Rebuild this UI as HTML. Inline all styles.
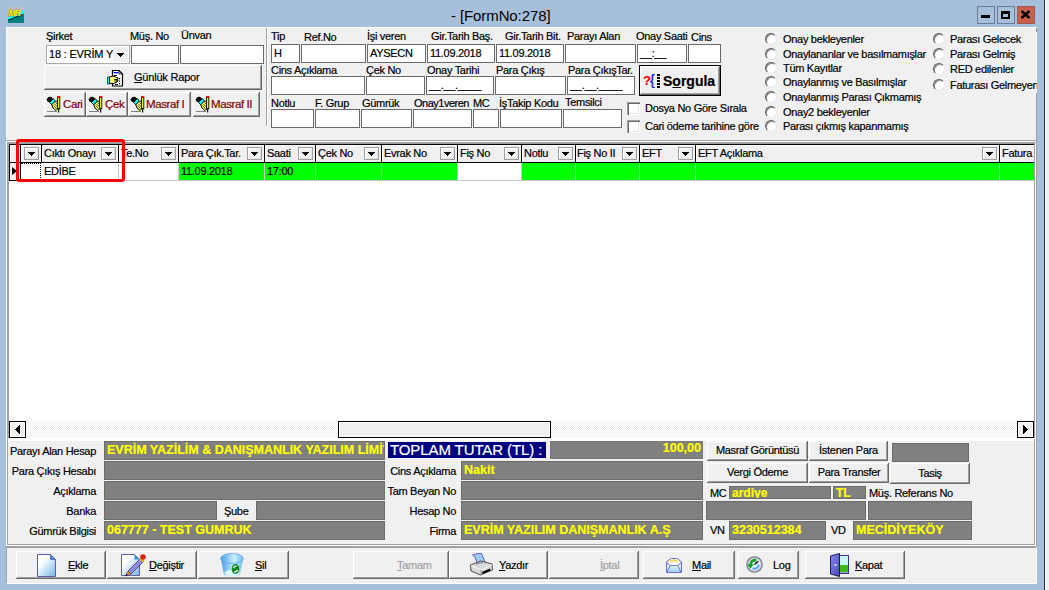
<!DOCTYPE html>
<html><head><meta charset="utf-8">
<style>
html,body{margin:0;padding:0}
body{width:1049px;height:590px;background:#a6bfdb;position:relative;overflow:hidden;font-family:"Liberation Sans",sans-serif;font-size:11px;color:#000;-webkit-text-stroke-width:0.2px}
.a{position:absolute;box-sizing:border-box}
.t{position:absolute;white-space:nowrap;font-size:11px;line-height:13px;letter-spacing:-0.3px;color:#000}
.e{position:absolute;box-sizing:border-box;background:#fff;border:1px solid #6a6a6a;overflow:hidden;white-space:nowrap;font-size:11px;line-height:17px;letter-spacing:-0.3px;padding-left:2px}
.g{position:absolute;box-sizing:border-box;background:#808080;border:1px solid #6c6c6c;overflow:hidden;white-space:nowrap;color:#ff0;font-weight:bold;font-size:12.5px;line-height:17px;padding-left:2px;letter-spacing:0}
.b{position:absolute;box-sizing:border-box;background:#f0f0f0;box-shadow:inset -1px -1px #696969,inset 1px 1px #fff,inset -2px -2px #a0a0a0,inset 2px 2px #f0f0f0;white-space:nowrap;font-size:11px;letter-spacing:-0.3px;text-align:center}
.dd{position:absolute;box-sizing:border-box;width:15px;height:13px;top:147px;border:1px solid #a0a0a0;background:#f0f0f0;box-shadow:inset 1px 1px #fff,inset -1px -1px #e3e3e3}
.dd:after{content:"";position:absolute;left:3px;top:4px;width:7px;height:4px;background:linear-gradient(#000,#000) 0 0/7px 1px no-repeat,linear-gradient(#000,#000) 1px 1px/5px 1px no-repeat,linear-gradient(#000,#000) 2px 2px/3px 1px no-repeat,linear-gradient(#000,#000) 3px 3px/1px 1px no-repeat}
.rd{position:absolute;box-sizing:border-box;width:12px;height:12px;border-radius:50%;background:#fff;border:1px solid;border-color:#5c5c5c #e8e8e8 #e8e8e8 #5c5c5c;box-shadow:inset 1px 1px #8a8a8a}
.cb{position:absolute;box-sizing:border-box;width:13px;height:13px;background:#fff;box-shadow:inset 1px 1px #a0a0a0,inset 2px 2px #696969,inset -1px -1px #fff,inset -2px -2px #e3e3e3}
.hc{position:absolute;top:145px;height:17px;background:#f0f0f0}
.vl{position:absolute;width:1px}
</style></head><body>
<!-- title bar -->
<div class="a" style="left:1044px;top:0;width:1px;height:590px;background:#2e3133"></div>
<div class="a" style="left:1045px;top:0;width:4px;height:590px;background:#f0f0f0;border-left:1px solid #fff"></div>
<div class="t" style="left:451px;top:7px;font-size:15px;line-height:18px;letter-spacing:-0.1px;-webkit-text-stroke-width:0">- [FormNo:278]</div>


<!-- app icon -->
<svg class="a" style="left:8px;top:7px" width="16" height="16" viewBox="0 0 16 16"><rect width="16" height="16" fill="#c0c0c0"/><polygon points="0,10.5 13,6 12,4 16,3 15,7.5 14,6.5 0,13" fill="#00ffff"/><polygon points="0,13 14,8 16,6 16,16 0,16" fill="#008080"/><path d="M0 13.3 L14.5 7.5" stroke="#002828" stroke-width="1.2"/><text x="0.5" y="9" font-family="Liberation Sans" font-weight="bold" font-style="italic" font-size="8.5" letter-spacing="-0.8" fill="#ffff00" stroke="#303000" stroke-width="0.5" paint-order="stroke">MR</text></svg>
<!-- caption buttons -->
<div class="a" style="left:977px;top:6px;width:18px;height:18px;border:1px solid #6a7d95;background:#a6bfdb"></div>
<div class="a" style="left:981px;top:15px;width:9px;height:3px;background:#000"></div>
<div class="a" style="left:997px;top:6px;width:18px;height:18px;border:1px solid #6a7d95;background:#a6bfdb"></div>
<div class="a" style="left:1001px;top:11px;width:9px;height:8px;border:2px solid #000;border-top-width:3px"></div>
<div class="a" style="left:1017px;top:6px;width:18px;height:18px;border:1px solid #9a5a4e;background:#c9604c"></div>
<svg class="a" style="left:1020px;top:10px" width="11" height="9" viewBox="0 0 11 9"><path d="M1.5 1 L9.5 8 M9.5 1 L1.5 8" stroke="#000" stroke-width="2.4"/></svg>

<!-- client area -->
<div class="a" style="left:6px;top:27px;width:1031px;height:557px;background:#f0f0f0;border:1px solid #fff"></div>


<!-- ===== top panel ===== -->
<div class="t" style="left:46px;top:30px">Şirket</div>
<div class="t" style="left:130px;top:30px">Müş. No</div>
<div class="t" style="left:181px;top:29px">Ünvan</div>
<div class="a" style="left:46px;top:45px;width:84px;height:19px;background:#fff;border:1px solid #a9a9a9"></div>
<div class="t" style="left:49px;top:48px;letter-spacing:-0.2px">18 : EVRİM Y</div>
<div class="a" style="left:113px;top:47px;width:15px;height:15px;background:#f0f0f0"></div>
<div class="a" style="left:117px;top:53px;width:7px;height:4px;background:linear-gradient(#000,#000) 0 0/7px 1px no-repeat,linear-gradient(#000,#000) 1px 1px/5px 1px no-repeat,linear-gradient(#000,#000) 2px 2px/3px 1px no-repeat,linear-gradient(#000,#000) 3px 3px/1px 1px no-repeat"></div>
<div class="e" style="left:131px;top:45px;width:48px;height:19px"></div>
<div class="e" style="left:180px;top:45px;width:84px;height:19px"></div>
<div class="b" style="left:44px;top:65px;width:218px;height:25px"></div>
<div class="t" style="left:134px;top:71px;letter-spacing:-0.2px"><u>G</u>ünlük Rapor</div>
<div class="b" style="left:44px;top:92px;width:42px;height:25px"></div>
<div class="b" style="left:86px;top:92px;width:42px;height:25px"></div>
<div class="b" style="left:128px;top:92px;width:63px;height:25px"></div>
<div class="b" style="left:193px;top:92px;width:67px;height:25px"></div>
<div class="t" style="left:63px;top:98px;color:#800000;font-size:11.5px;letter-spacing:-0.4px">Cari</div>
<div class="t" style="left:105px;top:98px;color:#800000;font-size:11.5px;letter-spacing:-0.4px">Çek</div>
<div class="t" style="left:146px;top:98px;color:#800000;font-size:11.5px;letter-spacing:-0.4px">Masraf I</div>
<div class="t" style="left:211px;top:98px;color:#800000;font-size:11.5px;letter-spacing:-0.4px">Masraf II</div>
<svg class="a" style="left:46px;top:96px" width="16" height="17" viewBox="0 0 16 17"><path d="M0.5 3.5 L2.5 1 L5 0.8 L7.5 3 L4.5 6.5 L1.5 5.5 Z" fill="#000"/><path d="M3.5 6.5 L7.2 2.8 L9.5 5 L5.8 8.8 Z" fill="#00ffff" stroke="#000" stroke-width="0.9"/><path d="M5.8 8.8 L9.5 5 L11.8 5.5 L12.2 9 L12 12.5 L10 14.5 L7 12 Z" fill="#ffff70" stroke="#000" stroke-width="1"/><path d="M7.5 9.5 L10.5 12.5 M8.5 8 L11.5 11 M9.5 6.5 L12 9" stroke="#000" stroke-width="0.7"/><rect x="11.6" y="1.2" width="2.2" height="11.5" fill="#ffff00" stroke="#000" stroke-width="0.9"/><rect x="11.2" y="0" width="3" height="1.5" fill="#ff0000"/><path d="M12.7 12.5 V16.5" stroke="#000" stroke-width="1.1"/><path d="M1 15.5 H11" stroke="#808080" stroke-width="1"/></svg>
<svg class="a" style="left:88px;top:96px" width="16" height="17" viewBox="0 0 16 17"><path d="M0.5 3.5 L2.5 1 L5 0.8 L7.5 3 L4.5 6.5 L1.5 5.5 Z" fill="#000"/><path d="M3.5 6.5 L7.2 2.8 L9.5 5 L5.8 8.8 Z" fill="#00ffff" stroke="#000" stroke-width="0.9"/><path d="M5.8 8.8 L9.5 5 L11.8 5.5 L12.2 9 L12 12.5 L10 14.5 L7 12 Z" fill="#ffff70" stroke="#000" stroke-width="1"/><path d="M7.5 9.5 L10.5 12.5 M8.5 8 L11.5 11 M9.5 6.5 L12 9" stroke="#000" stroke-width="0.7"/><rect x="11.6" y="1.2" width="2.2" height="11.5" fill="#ffff00" stroke="#000" stroke-width="0.9"/><rect x="11.2" y="0" width="3" height="1.5" fill="#ff0000"/><path d="M12.7 12.5 V16.5" stroke="#000" stroke-width="1.1"/><path d="M1 15.5 H11" stroke="#808080" stroke-width="1"/></svg>
<svg class="a" style="left:130px;top:96px" width="16" height="17" viewBox="0 0 16 17"><path d="M0.5 3.5 L2.5 1 L5 0.8 L7.5 3 L4.5 6.5 L1.5 5.5 Z" fill="#000"/><path d="M3.5 6.5 L7.2 2.8 L9.5 5 L5.8 8.8 Z" fill="#00ffff" stroke="#000" stroke-width="0.9"/><path d="M5.8 8.8 L9.5 5 L11.8 5.5 L12.2 9 L12 12.5 L10 14.5 L7 12 Z" fill="#ffff70" stroke="#000" stroke-width="1"/><path d="M7.5 9.5 L10.5 12.5 M8.5 8 L11.5 11 M9.5 6.5 L12 9" stroke="#000" stroke-width="0.7"/><rect x="11.6" y="1.2" width="2.2" height="11.5" fill="#ffff00" stroke="#000" stroke-width="0.9"/><rect x="11.2" y="0" width="3" height="1.5" fill="#ff0000"/><path d="M12.7 12.5 V16.5" stroke="#000" stroke-width="1.1"/><path d="M1 15.5 H11" stroke="#808080" stroke-width="1"/></svg>
<svg class="a" style="left:195px;top:96px" width="16" height="17" viewBox="0 0 16 17"><path d="M0.5 3.5 L2.5 1 L5 0.8 L7.5 3 L4.5 6.5 L1.5 5.5 Z" fill="#000"/><path d="M3.5 6.5 L7.2 2.8 L9.5 5 L5.8 8.8 Z" fill="#00ffff" stroke="#000" stroke-width="0.9"/><path d="M5.8 8.8 L9.5 5 L11.8 5.5 L12.2 9 L12 12.5 L10 14.5 L7 12 Z" fill="#ffff70" stroke="#000" stroke-width="1"/><path d="M7.5 9.5 L10.5 12.5 M8.5 8 L11.5 11 M9.5 6.5 L12 9" stroke="#000" stroke-width="0.7"/><rect x="11.6" y="1.2" width="2.2" height="11.5" fill="#ffff00" stroke="#000" stroke-width="0.9"/><rect x="11.2" y="0" width="3" height="1.5" fill="#ff0000"/><path d="M12.7 12.5 V16.5" stroke="#000" stroke-width="1.1"/><path d="M1 15.5 H11" stroke="#808080" stroke-width="1"/></svg>
<svg class="a" style="left:107px;top:70px" width="17" height="17" viewBox="0 0 17 17"><path d="M5.5 0.5 H12 L15.5 4 V16 H5.5 Z" fill="#fff" stroke="#000" stroke-width="1.2"/><path d="M12 0.5 V4 H15.5" fill="none" stroke="#000" stroke-width="0.8"/><rect x="6.5" y="2" width="5" height="1.3" fill="#00f"/><rect x="7" y="5" width="3" height="1" fill="#000"/><rect x="12" y="8" width="1.2" height="1.2" fill="#000"/><rect x="12" y="10.5" width="1.2" height="1.2" fill="#000"/><rect x="12" y="13" width="1.2" height="1.2" fill="#000"/><rect x="8" y="14" width="3" height="1" fill="#000"/><rect x="0.5" y="7" width="2" height="7" fill="#0ff" stroke="#000" stroke-width="0.6"/><path d="M2.5 7 L6 6 L11 8 L11 9.5 L8 9.5 L11 10.5 L10 12 L7 13.5 L2.5 13.5 Z" fill="#ffff80" stroke="#000" stroke-width="1"/><path d="M7 9.5 L11 9.5 M7 11 L10.5 11" stroke="#000" stroke-width="0.8"/></svg>
<!-- separator -->
<div class="a" style="left:266px;top:28px;width:2px;height:98px;border-left:1px solid #a0a0a0;border-right:1px solid #fff"></div>

<!-- row 0 labels -->
<div class="t" style="left:271px;top:30px">Tip</div>
<div class="t" style="left:304px;top:31px">Ref.No</div>
<div class="t" style="left:367px;top:30px">İşi veren</div>
<div class="t" style="left:431px;top:30px">Gir.Tarih Baş.</div>
<div class="t" style="left:505px;top:30px">Gir.Tarih Bit.</div>
<div class="t" style="left:567px;top:30px">Parayı Alan</div>
<div class="t" style="left:636px;top:30px">Onay Saati</div>
<div class="t" style="left:691px;top:31px">Cins</div>
<!-- row 0 edits -->
<div class="e" style="left:271px;top:44px;width:29px;height:19px">H</div>
<div class="e" style="left:301px;top:44px;width:65px;height:19px"></div>
<div class="e" style="left:367px;top:44px;width:59px;height:19px">AYSECN</div>
<div class="e" style="left:427px;top:44px;width:68px;height:19px">11.09.2018</div>
<div class="e" style="left:496px;top:44px;width:68px;height:19px">11.09.2018</div>
<div class="e" style="left:565px;top:44px;width:71px;height:19px"></div>
<div class="e" style="left:637px;top:44px;width:50px;height:19px">__:__</div>
<div class="e" style="left:688px;top:44px;width:33px;height:19px"></div>
<!-- row 1 labels -->
<div class="t" style="left:271px;top:64px">Cins Açıklama</div>
<div class="t" style="left:366px;top:64px">Çek No</div>
<div class="t" style="left:427px;top:64px">Onay Tarihi</div>
<div class="t" style="left:496px;top:64px">Para Çıkış</div>
<div class="t" style="left:568px;top:64px">Para ÇıkışTar.</div>
<!-- row 1 edits -->
<div class="e" style="left:271px;top:76px;width:94px;height:19px"></div>
<div class="e" style="left:366px;top:76px;width:59px;height:19px"></div>
<div class="e" style="left:426px;top:76px;width:68px;height:19px">__.__.____</div>
<div class="e" style="left:495px;top:76px;width:71px;height:19px"></div>
<div class="e" style="left:567px;top:76px;width:68px;height:19px">__.__.____</div>
<!-- sorgula -->
<div class="a" style="left:639px;top:65px;width:82px;height:31px;border:1px solid #000;background:#f0f0f0;box-shadow:inset -1px -1px #696969,inset 1px 1px #fff,inset -2px -2px #a0a0a0"></div>
<div class="t" style="left:643px;top:73px;color:#f00;font-weight:bold;font-size:13px;line-height:15px;letter-spacing:0">?</div>
<div class="t" style="left:650px;top:72px;color:#00f;font-size:14px;line-height:16px;letter-spacing:0">{</div>
<div class="a" style="left:657px;top:74px;width:3px;height:14px;background:repeating-linear-gradient(#000 0 2px,transparent 2px 3px)"></div>
<div class="t" style="left:663px;top:74px;font-weight:bold;font-size:14px;line-height:15px;letter-spacing:0">S<u>o</u>rgula</div>
<!-- row 2 labels -->
<div class="t" style="left:271px;top:97px">Notlu</div>
<div class="t" style="left:315px;top:97px">F. Grup</div>
<div class="t" style="left:362px;top:97px">Gümrük</div>
<div class="t" style="left:414px;top:97px;letter-spacing:-0.5px">Onay1veren</div>
<div class="t" style="left:473px;top:97px">MC</div>
<div class="t" style="left:499px;top:97px">İşTakip Kodu</div>
<div class="t" style="left:565px;top:96px">Temsilci</div>
<!-- row 2 edits -->
<div class="e" style="left:271px;top:109px;width:43px;height:19px"></div>
<div class="e" style="left:315px;top:109px;width:45px;height:19px"></div>
<div class="e" style="left:361px;top:109px;width:51px;height:19px"></div>
<div class="e" style="left:413px;top:109px;width:59px;height:19px"></div>
<div class="e" style="left:473px;top:109px;width:26px;height:19px"></div>
<div class="e" style="left:500px;top:109px;width:62px;height:19px"></div>
<div class="e" style="left:563px;top:109px;width:59px;height:19px"></div>
<!-- checkboxes -->
<div class="cb" style="left:627px;top:102px"></div>
<div class="cb" style="left:627px;top:120px"></div>
<div class="t" style="left:645px;top:102px">Dosya No Göre Sırala</div>
<div class="t" style="left:645px;top:120px">Cari ödeme tarihine göre</div>
<!-- radios col 1 -->
<div class="rd" style="left:765px;top:33px"></div>
<div class="rd" style="left:765px;top:48px"></div>
<div class="rd" style="left:765px;top:62px"></div>
<div class="rd" style="left:765px;top:76px"></div>
<div class="rd" style="left:765px;top:91px"></div>
<div class="rd" style="left:765px;top:106px"></div>
<div class="rd" style="left:765px;top:120px"></div>
<div class="t" style="left:783px;top:33px">Onay bekleyenler</div>
<div class="t" style="left:783px;top:48px">Onaylananlar ve basılmamışlar</div>
<div class="t" style="left:783px;top:62px">Tüm Kayıtlar</div>
<div class="t" style="left:783px;top:76px">Onaylanmış ve Basılmışlar</div>
<div class="t" style="left:783px;top:91px">Onaylanmış Parası Çıkmamış</div>
<div class="t" style="left:783px;top:106px">Onay2 bekleyenler</div>
<div class="t" style="left:783px;top:120px">Parası çıkmış kapanmamış</div>
<!-- radios col 2 -->
<div class="rd" style="left:933px;top:33px"></div>
<div class="rd" style="left:933px;top:48px"></div>
<div class="rd" style="left:933px;top:63px"></div>
<div class="rd" style="left:933px;top:79px"></div>
<div class="t" style="left:950px;top:33px">Parası Gelecek</div>
<div class="t" style="left:950px;top:48px">Parası Gelmiş</div>
<div class="t" style="left:950px;top:63px">RED edilenler</div>
<div class="a" style="left:950px;top:79px;width:87px;height:14px;overflow:hidden"><div class="t" style="left:0;top:0">Faturası Gelmeyen</div></div>

<!-- ===== grid ===== -->
<div class="a" style="left:6px;top:140px;width:1031px;height:1px;background:#a0a0a0"></div><div class="a" style="left:6px;top:141px;width:1030px;height:1px;background:#fff"></div>
<div class="a" style="left:7px;top:142px;width:1029px;height:297px;border-top:1px solid #a0a0a0;border-left:1px solid #a0a0a0;border-right:1px solid #fff;border-bottom:1px solid #fff;background:#fff"></div>
<div class="a" style="left:8px;top:143px;width:1027px;height:295px;border-top:1px solid #a0a0a0;border-left:1px solid #a0a0a0;border-right:1px solid #a0a0a0;border-bottom:1px solid #a0a0a0;background:#fff"></div>
<div class="a" style="left:9px;top:144px;width:1025px;height:19px;background:#f0f0f0;border-top:1px solid #000;border-bottom:1px solid #000"></div><div class="a" style="left:10px;top:145px;width:1024px;height:1px;background:#fff"></div>
<div class="a" style="left:9px;top:144px;width:1px;height:19px;background:#000"></div>
<div class="a" style="left:10px;top:145px;width:1px;height:17px;background:#fff"></div>
<div class="a" style="left:20px;top:144px;width:1px;height:19px;background:#000"></div>
<div class="a" style="left:21px;top:145px;width:1px;height:17px;background:#fff"></div>
<div class="a" style="left:41px;top:144px;width:1px;height:19px;background:#000"></div>
<div class="a" style="left:42px;top:145px;width:1px;height:17px;background:#fff"></div>
<div class="a" style="left:118px;top:144px;width:1px;height:19px;background:#000"></div>
<div class="a" style="left:119px;top:145px;width:1px;height:17px;background:#fff"></div>
<div class="a" style="left:178px;top:144px;width:1px;height:19px;background:#000"></div>
<div class="a" style="left:179px;top:145px;width:1px;height:17px;background:#fff"></div>
<div class="a" style="left:264px;top:144px;width:1px;height:19px;background:#000"></div>
<div class="a" style="left:265px;top:145px;width:1px;height:17px;background:#fff"></div>
<div class="a" style="left:315px;top:144px;width:1px;height:19px;background:#000"></div>
<div class="a" style="left:316px;top:145px;width:1px;height:17px;background:#fff"></div>
<div class="a" style="left:381px;top:144px;width:1px;height:19px;background:#000"></div>
<div class="a" style="left:382px;top:145px;width:1px;height:17px;background:#fff"></div>
<div class="a" style="left:457px;top:144px;width:1px;height:19px;background:#000"></div>
<div class="a" style="left:458px;top:145px;width:1px;height:17px;background:#fff"></div>
<div class="a" style="left:521px;top:144px;width:1px;height:19px;background:#000"></div>
<div class="a" style="left:522px;top:145px;width:1px;height:17px;background:#fff"></div>
<div class="a" style="left:575px;top:144px;width:1px;height:19px;background:#000"></div>
<div class="a" style="left:576px;top:145px;width:1px;height:17px;background:#fff"></div>
<div class="a" style="left:639px;top:144px;width:1px;height:19px;background:#000"></div>
<div class="a" style="left:640px;top:145px;width:1px;height:17px;background:#fff"></div>
<div class="a" style="left:695px;top:144px;width:1px;height:19px;background:#000"></div>
<div class="a" style="left:696px;top:145px;width:1px;height:17px;background:#fff"></div>
<div class="a" style="left:999px;top:144px;width:1px;height:19px;background:#000"></div>
<div class="a" style="left:1000px;top:145px;width:1px;height:17px;background:#fff"></div>
<div class="a" style="left:20px;top:163px;width:21px;height:17px;background:#fff"></div>
<div class="a" style="left:41px;top:163px;width:77px;height:17px;background:#fff"></div>
<div class="a" style="left:118px;top:163px;width:60px;height:17px;background:#fff"></div>
<div class="a" style="left:178px;top:163px;width:86px;height:17px;background:#00ff00"></div>
<div class="a" style="left:264px;top:163px;width:51px;height:17px;background:#00ff00"></div>
<div class="a" style="left:315px;top:163px;width:66px;height:17px;background:#00ff00"></div>
<div class="a" style="left:381px;top:163px;width:76px;height:17px;background:#00ff00"></div>
<div class="a" style="left:457px;top:163px;width:64px;height:17px;background:#fff"></div>
<div class="a" style="left:521px;top:163px;width:54px;height:17px;background:#00ff00"></div>
<div class="a" style="left:575px;top:163px;width:64px;height:17px;background:#00ff00"></div>
<div class="a" style="left:639px;top:163px;width:56px;height:17px;background:#00ff00"></div>
<div class="a" style="left:695px;top:163px;width:304px;height:17px;background:#00ff00"></div>
<div class="a" style="left:999px;top:163px;width:35px;height:17px;background:#00ff00"></div>
<div class="a" style="left:118px;top:163px;width:1px;height:17px;background:#c8c8c8"></div>
<div class="a" style="left:178px;top:163px;width:1px;height:17px;background:#c8c8c8"></div>
<div class="a" style="left:264px;top:163px;width:1px;height:17px;background:#c8c8c8"></div>
<div class="a" style="left:315px;top:163px;width:1px;height:17px;background:#c8c8c8"></div>
<div class="a" style="left:381px;top:163px;width:1px;height:17px;background:#c8c8c8"></div>
<div class="a" style="left:457px;top:163px;width:1px;height:17px;background:#c8c8c8"></div>
<div class="a" style="left:521px;top:163px;width:1px;height:17px;background:#c8c8c8"></div>
<div class="a" style="left:575px;top:163px;width:1px;height:17px;background:#c8c8c8"></div>
<div class="a" style="left:639px;top:163px;width:1px;height:17px;background:#c8c8c8"></div>
<div class="a" style="left:695px;top:163px;width:1px;height:17px;background:#c8c8c8"></div>
<div class="a" style="left:999px;top:163px;width:1px;height:17px;background:#c8c8c8"></div>
<div class="a" style="left:41px;top:180px;width:993px;height:1px;background:#c8c8c8"></div>
<div class="a" style="left:9px;top:163px;width:12px;height:18px;background:#f0f0f0;border-left:1px solid #000;border-right:1px solid #000;border-bottom:1px solid #000"></div>
<div class="a" style="left:21px;top:163px;width:20px;height:18px;border-bottom:1px solid #c8c8c8;background:#fff"></div>
<div class="a" style="left:12px;top:167px;border-top:4.5px solid transparent;border-bottom:4.5px solid transparent;border-left:5px solid #000"></div>
<div class="a" style="left:21px;top:163px;width:20px;height:17px;border-top:1px dotted #000;border-right:1px dotted #000"></div>
<div class="dd" style="left:24px"></div>
<div class="dd" style="left:101px"></div>
<div class="dd" style="left:161px"></div>
<div class="dd" style="left:247px"></div>
<div class="dd" style="left:298px"></div>
<div class="dd" style="left:364px"></div>
<div class="dd" style="left:440px"></div>
<div class="dd" style="left:504px"></div>
<div class="dd" style="left:558px"></div>
<div class="dd" style="left:622px"></div>
<div class="dd" style="left:678px"></div>
<div class="dd" style="left:982px"></div>
<div class="dd" style="left:24px"></div>
<div class="t" style="left:44px;top:147px">Cıktı Onayı</div>
<div class="t" style="left:121px;top:147px">Te.No</div>
<div class="t" style="left:181px;top:147px">Para Çık.Tar.</div>
<div class="t" style="left:267px;top:147px">Saati</div>
<div class="t" style="left:318px;top:147px">Çek No</div>
<div class="t" style="left:384px;top:147px">Evrak No</div>
<div class="t" style="left:460px;top:147px">Fiş No</div>
<div class="t" style="left:524px;top:147px">Notlu</div>
<div class="t" style="left:577px;top:147px">Fiş No II</div>
<div class="t" style="left:642px;top:147px">EFT</div>
<div class="t" style="left:698px;top:147px">EFT Açıklama</div>
<div class="a" style="left:1001px;top:145px;width:33px;height:17px;overflow:hidden"><div class="t" style="left:1px;top:2px">Fatura</div></div>
<div class="t" style="left:44px;top:165px">EDİBE</div>
<div class="t" style="left:181px;top:165px">11.09.2018</div>
<div class="t" style="left:267px;top:165px">17:00</div>
<div class="a" style="left:16px;top:139px;width:109px;height:43px;border:3px solid #ff0000;border-radius:3px"></div>
<div class="a" style="left:9px;top:421px;width:1025px;height:17px;background-color:#f7f7f7;background-image:repeating-conic-gradient(#f0f0f0 0 25%, #fff 0 50%);background-size:2px 2px"></div>
<div class="a" style="left:9px;top:421px;width:17px;height:17px;border:1px solid #000;background:#f0f0f0;box-shadow:inset 0 0 0 1px #fff"></div>
<div class="a" style="left:15px;top:425px;width:5px;height:9px;background:linear-gradient(#000,#000) 4px 0px/1px 1px no-repeat,linear-gradient(#000,#000) 3px 1px/2px 1px no-repeat,linear-gradient(#000,#000) 2px 2px/3px 1px no-repeat,linear-gradient(#000,#000) 1px 3px/4px 1px no-repeat,linear-gradient(#000,#000) 0px 4px/5px 1px no-repeat,linear-gradient(#000,#000) 1px 5px/4px 1px no-repeat,linear-gradient(#000,#000) 2px 6px/3px 1px no-repeat,linear-gradient(#000,#000) 3px 7px/2px 1px no-repeat,linear-gradient(#000,#000) 4px 8px/1px 1px no-repeat"></div>
<div class="a" style="left:1017px;top:421px;width:17px;height:17px;border:1px solid #000;background:#f0f0f0;box-shadow:inset 0 0 0 1px #fff"></div>
<div class="a" style="left:1023px;top:425px;width:5px;height:9px;background:linear-gradient(#000,#000) 0px 0px/1px 1px no-repeat,linear-gradient(#000,#000) 0px 1px/2px 1px no-repeat,linear-gradient(#000,#000) 0px 2px/3px 1px no-repeat,linear-gradient(#000,#000) 0px 3px/4px 1px no-repeat,linear-gradient(#000,#000) 0px 4px/5px 1px no-repeat,linear-gradient(#000,#000) 0px 5px/4px 1px no-repeat,linear-gradient(#000,#000) 0px 6px/3px 1px no-repeat,linear-gradient(#000,#000) 0px 7px/2px 1px no-repeat,linear-gradient(#000,#000) 0px 8px/1px 1px no-repeat"></div>
<div class="a" style="left:338px;top:421px;width:213px;height:17px;border:1px solid #000;background:#f0f0f0;box-shadow:inset 0 0 0 1px #fff"></div>
<!-- ===== data panel ===== -->
<div class="a" style="left:6px;top:439px;width:1px;height:107px;background:#fff"></div>
<div class="a" style="left:7px;top:439px;width:1px;height:106px;background:#a0a0a0"></div>
<div class="a" style="left:7px;top:544px;width:1028px;height:1px;background:#a0a0a0"></div>
<div class="a" style="left:1034px;top:439px;width:1px;height:106px;background:#a0a0a0"></div>
<div class="a" style="left:1035px;top:439px;width:1px;height:107px;background:#fff"></div>
<div class="a" style="left:6px;top:545px;width:1030px;height:1px;background:#fff"></div>
<div class="a" style="left:1036px;top:93px;width:1px;height:455px;background:#a0a0a0"></div><div class="a" style="left:1036px;top:28px;width:1px;height:4px;background:#909090"></div>
<div class="a" style="left:8px;top:439px;width:1026px;height:2px;background:#fff"></div>
<div class="t" style="left:0;width:96px;text-align:right;top:445px">Parayı Alan Hesap</div>
<div class="t" style="left:0;width:96px;text-align:right;top:465px">Para Çıkış Hesabı</div>
<div class="t" style="left:0;width:96px;text-align:right;top:485px">Açıklama</div>
<div class="t" style="left:0;width:96px;text-align:right;top:505px">Banka</div>
<div class="t" style="left:0;width:96px;text-align:right;top:525px">Gümrük Bilgisi</div>
<div class="t" style="left:360px;width:96px;text-align:right;top:465px">Cins Açıklama</div>
<div class="t" style="left:360px;width:96px;text-align:right;top:485px">Tam Beyan No</div>
<div class="t" style="left:360px;width:96px;text-align:right;top:505px">Hesap No</div>
<div class="t" style="left:360px;width:96px;text-align:right;top:525px">Firma</div>
<div class="g" style="left:104px;top:441px;width:281px;height:19px;">EVRİM YAZİLİM &amp; DANIŞMANLIK YAZILIM LİMİTED</div>
<div class="g" style="left:104px;top:461px;width:281px;height:19px;"></div>
<div class="g" style="left:104px;top:481px;width:281px;height:19px;"></div>
<div class="g" style="left:104px;top:501px;width:113px;height:19px;"></div>
<div class="t" style="left:224px;top:505px">Şube</div>
<div class="g" style="left:256px;top:501px;width:129px;height:19px;"></div>
<div class="g" style="left:104px;top:521px;width:281px;height:19px;">067777 - TEST GUMRUK</div>
<div class="a" style="left:388px;top:442px;width:158px;height:16px;background:#000080"></div>
<div class="t" style="left:390px;top:441px;color:#fff;font-size:15px;line-height:18px;letter-spacing:-0.1px">TOPLAM TUTAR (TL) :</div>
<div class="g" style="left:550px;top:441px;width:153px;height:18px;text-align:right;padding-right:1px;line-height:13px;border-color:#7a7a7a">100,00</div>
<div class="g" style="left:461px;top:461px;width:242px;height:19px;">Nakit</div>
<div class="g" style="left:461px;top:481px;width:242px;height:19px;"></div>
<div class="g" style="left:461px;top:501px;width:242px;height:19px;"></div>
<div class="g" style="left:461px;top:521px;width:242px;height:19px;">EVRİM YAZILIM DANIŞMANLIK A.Ş</div>
<div class="b" style="left:707px;top:441px;width:101px;height:20px;line-height:19px">Masraf Görüntüsü</div>
<div class="b" style="left:809px;top:441px;width:79px;height:20px;line-height:19px">İstenen Para</div>
<div class="g" style="left:892px;top:443px;width:77px;height:19px;"></div>
<div class="b" style="left:707px;top:463px;width:101px;height:20px;line-height:19px">Vergi Ödeme</div>
<div class="b" style="left:809px;top:463px;width:80px;height:20px;line-height:19px">Para Transfer</div>
<div class="b" style="left:890px;top:463px;width:80px;height:21px;line-height:20px">Tasiş</div>
<div class="t" style="left:710px;top:487px">MC</div>
<div class="g" style="left:729px;top:486px;width:102px;height:13px;line-height:12px;font-size:12px">ardiye</div>
<div class="g" style="left:833px;top:486px;width:33px;height:13px;line-height:12px;font-size:12px">TL</div>
<div class="t" style="left:869px;top:487px">Müş. Referans No</div>
<div class="g" style="left:706px;top:501px;width:160px;height:19px;"></div>
<div class="g" style="left:868px;top:501px;width:104px;height:19px;"></div>
<div class="t" style="left:710px;top:524px">VN</div>
<div class="g" style="left:729px;top:521px;width:97px;height:19px;">3230512384</div>
<div class="t" style="left:831px;top:524px">VD</div>
<div class="g" style="left:853px;top:521px;width:119px;height:19px;">MECİDİYEKÖY</div>
<!-- ===== toolbar ===== -->
<div class="a" style="left:6px;top:546px;width:1031px;height:38px;border-top:2px solid #a0a0a0;border-left:1px solid #a0a0a0;border-right:1px solid #fff;border-bottom:1px solid #fff"></div>
<div class="b" style="left:16px;top:551px;width:90px;height:28px"></div>
<div class="t" style="left:68px;top:559px;color:#000"><u>E</u>kle</div>
<div class="b" style="left:107px;top:551px;width:90px;height:28px"></div>
<div class="t" style="left:149px;top:559px;color:#000"><u>D</u>eğiştir</div>
<div class="b" style="left:198px;top:551px;width:91px;height:28px"></div>
<div class="t" style="left:255px;top:559px;color:#000"><u>S</u>il</div>
<div class="b" style="left:353px;top:551px;width:96px;height:28px"></div>
<div class="t" style="left:397px;top:559px;color:#a0a0a0"><u>T</u>amam</div>
<div class="b" style="left:449px;top:551px;width:99px;height:28px"></div>
<div class="t" style="left:499px;top:559px;color:#000"><u>Y</u>azdır</div>
<div class="b" style="left:549px;top:551px;width:90px;height:28px"></div>
<div class="t" style="left:600px;top:559px;color:#a0a0a0"><u>İ</u>ptal</div>
<div class="b" style="left:643px;top:551px;width:92px;height:28px"></div>
<div class="t" style="left:692px;top:559px;color:#000"><u>M</u>ail</div>
<div class="b" style="left:738px;top:551px;width:61px;height:28px"></div>
<div class="t" style="left:773px;top:559px;color:#000">Log</div>
<div class="b" style="left:805px;top:551px;width:100px;height:28px"></div>
<div class="t" style="left:855px;top:559px;color:#000"><u>K</u>apat</div>

<!-- toolbar icons -->
<svg class="a" style="left:37px;top:554px" width="19" height="23" viewBox="0 0 19 23"><defs><linearGradient id="gd" x1="0" y1="0" x2="1" y2="1"><stop offset="0.3" stop-color="#fff"/><stop offset="0.95" stop-color="#7cbbe9"/></linearGradient></defs><path d="M0.5 0.5 H13.5 L18.5 5.5 V22.5 H0.5 Z" fill="url(#gd)" stroke="#5a5ea8"/><path d="M13.5 0.5 V5.5 H18.5 Z" fill="#3f90e2" stroke="#5a5ea8" stroke-width="0.8"/></svg>
<svg class="a" style="left:121px;top:553px" width="25" height="24" viewBox="0 0 25 24"><path d="M0.5 1.5 H13.5 L18.5 6.5 V22.5 H0.5 Z" fill="url(#gd)" stroke="#5a5ea8"/><path d="M13.5 1.5 V6.5 H18.5 Z" fill="#3f90e2"/><path d="M7 18 L19.5 5.5 L22.5 8.5 L10 21 Z" fill="#8f8ce0" stroke="#3c3a80" stroke-width="0.8"/><path d="M7 18 L10 21 L4.5 23 Z" fill="#d89a2a" stroke="#6a4a10" stroke-width="0.6"/><path d="M4.5 23 L5.3 20.8 L6.8 22.2 Z" fill="#000"/><path d="M18.5 6.5 L20.5 4.5 L23.5 7.5 L21.5 9.5 Z" fill="#f0b000"/><circle cx="22" cy="4" r="2.8" fill="#d82010"/></svg>
<svg class="a" style="left:220px;top:553px" width="25" height="25" viewBox="0 0 25 25"><defs><linearGradient id="gb" x1="0" y1="0" x2="1" y2="0"><stop offset="0" stop-color="#4a9ae8"/><stop offset="0.6" stop-color="#c8f0ff"/><stop offset="1" stop-color="#70bcf2"/></linearGradient></defs><path d="M0.8 5.5 L4 21.5 Q12 25.5 20 21.5 L23.2 5.5 Z" fill="url(#gb)"/><ellipse cx="12" cy="5.5" rx="11.3" ry="5" fill="url(#gb)" stroke="#5aa6ee" stroke-width="0.8"/><ellipse cx="12" cy="20" rx="7.5" ry="3.2" fill="#dcf8ff"/><ellipse cx="15.5" cy="16" rx="3.8" ry="5" fill="#0a8a1a"/><path d="M13.5 15 Q14.5 12.8 16.8 13.2 M17.5 17 Q16.5 19.2 14.2 18.8" fill="none" stroke="#fff" stroke-width="1.3"/></svg>
<svg class="a" style="left:470px;top:553px" width="25" height="23" viewBox="0 0 25 23"><path d="M2.5 2 L7.5 0.5 L11.5 0.5 L15.5 10 L8 13 L5 4 Z" fill="#9cc8f4" stroke="#5a5ea8" stroke-width="0.9"/><path d="M0.5 12 L11 8 L22 11 L22.5 17 L10.5 22 L1 18 Z" fill="#d9d9d9" stroke="#404040" stroke-width="0.9"/><path d="M1 12.5 L11 17 L22 12" fill="none" stroke="#fff" stroke-width="1"/><path d="M11 17 L11 21.5" stroke="#909090"/><path d="M12 19 L20 15.5 L20.5 17.5 L12.5 21 Z" fill="#000"/><path d="M6 11 L13 9.5" stroke="#8080a0" stroke-width="1"/></svg>
<svg class="a" style="left:666px;top:558px" width="16" height="15" viewBox="0 0 16 15"><defs><linearGradient id="gm" x1="0" y1="0" x2="0" y2="1"><stop offset="0.3" stop-color="#fff"/><stop offset="1" stop-color="#96cff8"/></linearGradient></defs><path d="M0.5 3.8 L3.5 1.5 L5.5 0.5 H10.5 L12.5 1.5 L15.5 3.8 V14.5 H0.5 Z" fill="url(#gm)" stroke="#6a70c8"/><path d="M1.5 3.8 Q8 -1.2 14.5 3.8 Q12 4.8 8 4.8 Q4 4.8 1.5 3.8Z" fill="#f2d648"/><path d="M0.8 4 Q1.5 6.3 4.2 7.5 H11.8 Q14.5 6.3 15.2 4 Q8 2.5 0.8 4Z" fill="#fffdf2"/><path d="M0.8 4 Q1.5 6.3 4.2 7.5 H11.8 Q14.5 6.3 15.2 4 M4.2 7.5 L1.2 14 M11.8 7.5 L14.8 14" fill="none" stroke="#6a70c8" stroke-width="0.9"/></svg>
<svg class="a" style="left:746px;top:556px" width="17" height="17" viewBox="0 0 17 17"><circle cx="8.5" cy="8.5" r="7.6" fill="#eafaff" stroke="#86868e" stroke-width="1.5"/><circle cx="8.5" cy="8.5" r="6.3" fill="none" stroke="#c0c0e0" stroke-width="0.8"/><path d="M6.5 12.5 Q11.5 13.5 13 8.5" stroke="#5aa8f0" stroke-width="2.2" fill="none"/><path d="M8.5 8.5 L12.3 5.3" stroke="#000" stroke-width="1.4"/><path d="M10.5 2.8 Q4 2.5 3.3 8.2 L1.3 8.2 L4.3 12.8 L8 8.2 L6 8.2 Q6.5 5.4 10.5 5.4 Z" fill="#16a026"/></svg>
<svg class="a" style="left:830px;top:553px" width="20" height="24" viewBox="0 0 20 24"><defs><linearGradient id="gdr" x1="0" y1="0" x2="1" y2="1"><stop offset="0" stop-color="#8c8cf4"/><stop offset="1" stop-color="#4646b8"/></linearGradient></defs><rect x="9.5" y="2.5" width="9" height="18" fill="#c8f8ff" stroke="#38368a"/><rect x="10" y="12" width="8" height="8" fill="#3cbc10"/><rect x="10" y="19" width="8" height="1" fill="#9a9af0"/><path d="M0.5 3 L9.5 0.5 V23.5 L0.5 21 Z" fill="url(#gdr)" stroke="#1c1a4a"/><circle cx="5.5" cy="12" r="1.1" fill="#fff"/></svg>

</body></html>
